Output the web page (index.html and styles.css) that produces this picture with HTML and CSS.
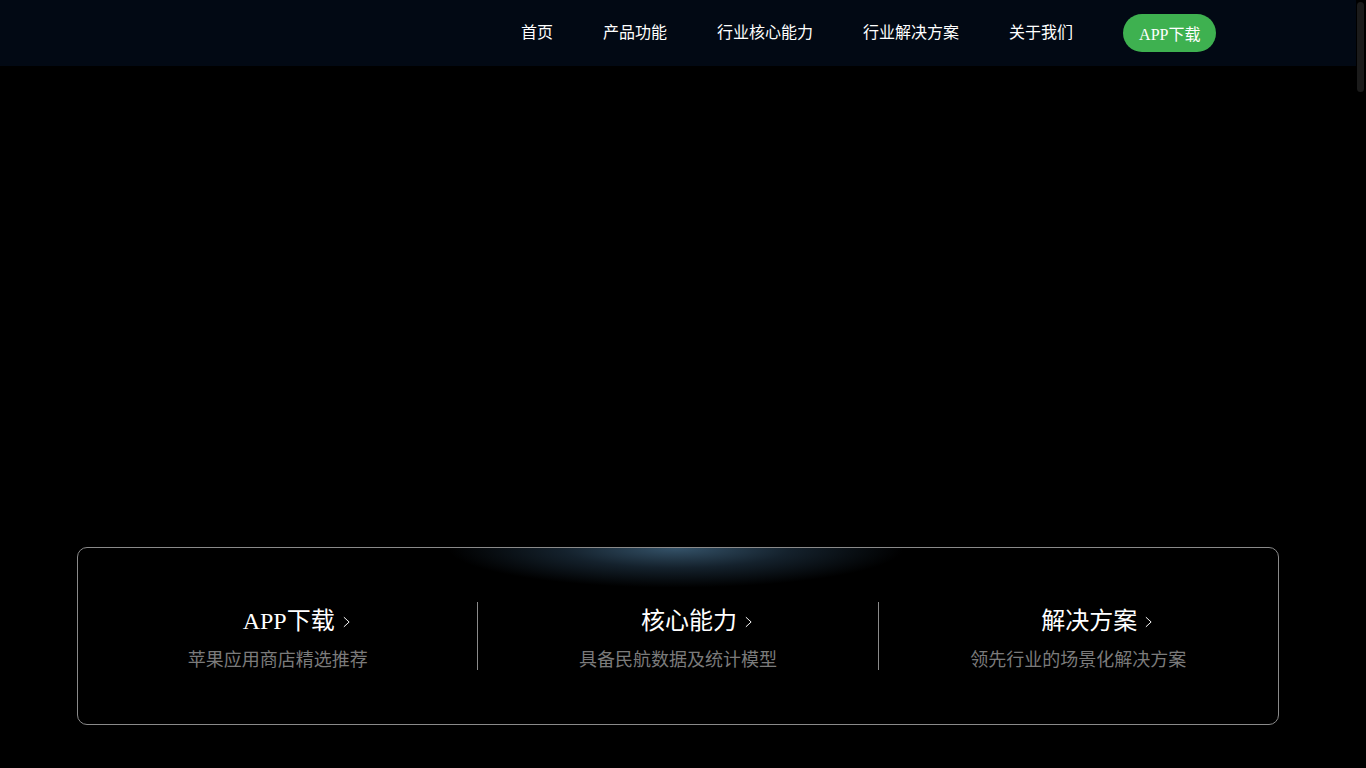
FILE: index.html
```html
<!DOCTYPE html>
<html lang="zh-CN">
<head>
<meta charset="utf-8">
<title>首页</title>
<link rel="stylesheet" href="styles.css">
</head>
<body>
<div class="page">
  <header class="topbar">
    <nav class="nav">
      <a class="nav-item" href="#">首页</a>
      <a class="nav-item" href="#">产品功能</a>
      <a class="nav-item" href="#">行业核心能力</a>
      <a class="nav-item" href="#">行业解决方案</a>
      <a class="nav-item" href="#">关于我们</a>
      <a class="nav-btn" href="#">APP下载</a>
    </nav>
  </header>
  <main class="hero">
    <section class="card">
      <div class="glow"></div>
      <div class="col">
        <div class="col-title">APP下载<svg class="chev" viewBox="0 0 8 13" width="7" height="12"><path d="M1 1 L7 6.5 L1 12" fill="none" stroke="#fff" stroke-width="1.1"/></svg></div>
        <div class="col-sub">苹果应用商店精选推荐</div>
      </div>
      <div class="divider"></div>
      <div class="col">
        <div class="col-title">核心能力<svg class="chev" viewBox="0 0 8 13" width="7" height="12"><path d="M1 1 L7 6.5 L1 12" fill="none" stroke="#fff" stroke-width="1.1"/></svg></div>
        <div class="col-sub">具备民航数据及统计模型</div>
      </div>
      <div class="divider"></div>
      <div class="col">
        <div class="col-title">解决方案<svg class="chev" viewBox="0 0 8 13" width="7" height="12"><path d="M1 1 L7 6.5 L1 12" fill="none" stroke="#fff" stroke-width="1.1"/></svg></div>
        <div class="col-sub">领先行业的场景化解决方案</div>
      </div>
    </section>
  </main>
  <div class="rest"></div>
</div>
<div class="scrollbar"><div class="thumb"></div></div>
</body>
</html>
```

FILE: styles.css
```css
html {
  background: #000;
}
body {
  margin: 0;
  background: #000;
  color: #fff;
  font-family: "Liberation Serif", "Noto Sans CJK SC", serif;
}
.page {
  width: calc(100% - 10px);
}
.scrollbar {
  position: fixed;
  top: 0;
  right: 0;
  width: 10px;
  height: 100vh;
  background: #000;
}
.thumb {
  margin: 2px 2px 0 1px;
  height: 90px;
  border-radius: 4px;
  background: #1b1b1b;
}
.topbar {
  height: 66px;
  background: #020914;
  display: flex;
  align-items: center;
}
.nav {
  display: flex;
  align-items: center;
  margin-left: 521px;
}
.nav-item {
  color: #fff;
  text-decoration: none;
  font-size: 16px;
  line-height: 22px;
  margin-right: 50px;
}
.nav-btn {
  display: block;
  height: 38px;
  line-height: 41px;
  padding: 0 16px 0 16px;
  border-radius: 19px;
  background: #3eb150;
  color: #fff;
  text-decoration: none;
  font-size: 16px;
}
.hero {
  padding: 481px 77px 0 77px;
}
.card {
  position: relative;
  overflow: hidden;
  height: 176px;
  border: 1px solid #8a8a8a;
  border-radius: 10px;
  display: flex;
  align-items: center;
}
.glow {
  position: absolute;
  left: 50%;
  top: -40px;
  width: 460px;
  height: 80px;
  margin-left: -232px;
  background: radial-gradient(ellipse at center, rgba(70,110,140,0.75) 0%, rgba(40,66,88,0.5) 35%, rgba(0,0,0,0) 70%);
}
.col {
  flex: 1;
  display: flex;
  flex-direction: column;
  align-items: center;
  padding-top: 5px;
}
.col-title {
  display: flex;
  align-items: center;
  font-size: 24px;
  line-height: 30px;
  padding-left: 37px;
}
.chev {
  margin-left: 8px;
  margin-top: 1px;
}
.col-sub {
  margin-top: 13px;
  font-size: 18px;
  line-height: 22px;
  color: #7b7b7b;
}
.divider {
  width: 1px;
  height: 68px;
  background: #8a8a8a;
}
.rest {
  height: 5700px;
}
```
